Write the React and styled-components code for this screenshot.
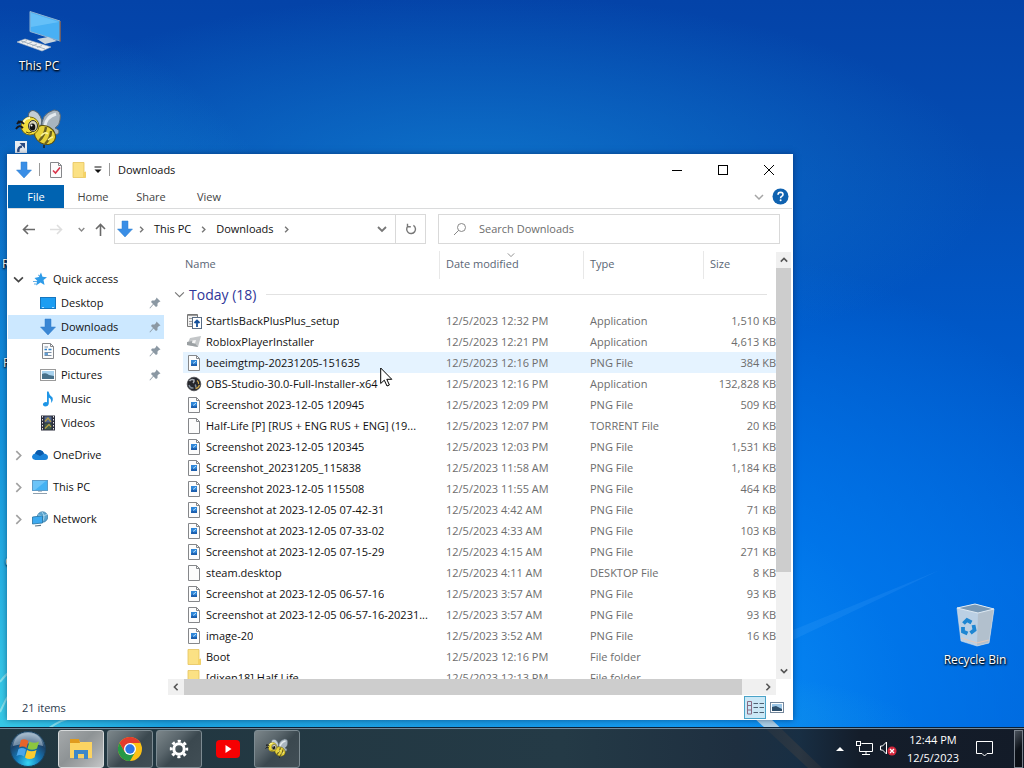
import React, { useState } from 'react'
import styled, { createGlobalStyle, css } from 'styled-components'

const GlobalStyle = createGlobalStyle`
    * {
        box-sizing : border-box;
    }
    body {
        margin : 0;
        overflow : hidden;
        font-family : "Open Sans", "Noto Sans", sans-serif;
        font-size : 11px;
        line-height : 16px;
        color : #111;
    }
    button, input {
        font : inherit;
        color : inherit;
        padding : 0;
        border : none;
        background : none;
        outline : none;
    }
    svg {
        display : block;
        flex : none;
    }
`;

const Screen = styled.div`
    position : relative;
    display : flex;
    flex-direction : column;
    height : 100vh;
    overflow : hidden;
    background :
        radial-gradient(ellipse 420px 700px at 0% 92%, #38cbe8 0%, rgba(24, 160, 224, 0.8) 40%, rgba(8, 110, 208, 0) 100%),
        radial-gradient(ellipse 700px 90px at 22% 95%, rgba(40, 180, 226, 0.9) 0%, rgba(20, 150, 230, 0) 100%),
        radial-gradient(ellipse 520px 460px at 66% 92%, #0a90f8 0%, rgba(0, 124, 240, 0.7) 45%, rgba(0, 100, 220, 0) 100%),
        radial-gradient(ellipse 520px 190px at 46% 24%, rgba(16, 122, 206, 0.85) 0%, rgba(8, 84, 186, 0) 100%),
        linear-gradient(180deg, #0443a8 0%, #044cb2 20%, #0057c6 42%, #0064da 75%, #005fd4 100%);
`;

// light streaks of the wallpaper
const Streaks = styled.svg`
    position : absolute;
    inset : 0;
    width : 100%;
    height : 100%;
`;

const DesktopArea = styled.main`
    position : relative;
    flex : 1;
    min-height : 0;
`;

const DesktopIcon = styled.button`
    position : absolute;
    left : ${({ $left }) => $left || 'auto'};
    right : ${({ $right }) => $right || 'auto'};
    top : ${({ $top }) => $top};
    width : 76px;
    display : flex;
    flex-direction : column;
    align-items : center;
    gap : 2px;
    font-size : 12px;
    color : #fff;
    text-shadow : 1px 1px 2px #000, 0 1px 2px #000;
    white-space : nowrap;
`;

const ShortcutBadge = styled.svg`
    position : absolute;
    left : 15px;
    top : 141px;
`;

const EdgeLabel = styled.span`
    position : absolute;
    left : ${({ $left }) => $left};
    top : ${({ $top }) => $top};
    font-size : 12px;
    color : #fff;
    text-shadow : 1px 1px 2px #000, 0 1px 2px #000;
`;

const Window = styled.section`
    position : absolute;
    left : 7px;
    right : 231px;
    top : 154px;
    bottom : 8px;
    display : flex;
    flex-direction : column;
    padding : 0 1px;
    background : #fff;
    box-shadow : 0 0 6px rgba(0, 20, 60, 0.5);
`;

const TitleBar = styled.header`
    display : flex;
    align-items : center;
    height : 31px;
    padding-left : 8px;
`;

const Divider = styled.span`
    width : 1px;
    height : 13px;
    background : #9a9a9a;
    margin : 0 8px 0 7px;
`;

const QuickButton = styled.button`
    display : flex;
    margin-right : ${({ $gap }) => $gap || '7px'};
`;

const Title = styled.h1`
    flex : 1;
    margin : 0;
    font-size : 11px;
    font-weight : 400;
`;

const WindowButton = styled.button`
    display : flex;
    align-items : center;
    justify-content : center;
    width : 46px;
    height : 30px;
`;

const Ribbon = styled.nav`
    display : flex;
    align-items : center;
    height : 24px;
    border-bottom : 1px solid #dadbdc;
`;

const Tab = styled.button`
    height : 23px;
    width : 58px;
    color : #444;
    ${({ $file }) => $file && css`
        width : 56px;
        background : #0063b1;
        color : #fff;
    `}
`;

const RibbonEnd = styled.div`
    display : flex;
    align-items : center;
    gap : 8px;
    margin-left : auto;
    padding-right : 3px;
`;

const NavRow = styled.div`
    display : flex;
    align-items : center;
    height : 40px;
    padding : 0 12px 0 11px;
`;

const NavButton = styled.button`
    display : flex;
    align-items : center;
    justify-content : center;
    width : ${({ $width }) => $width};
    height : 28px;
`;

const AddressBar = styled.div`
    flex : 1 1 312px;
    display : flex;
    align-items : center;
    height : 30px;
    padding-left : 2px;
    border : 1px solid #d9d9d9;
`;

const CrumbRoot = styled.button`
    display : flex;
    padding-left : 5px;
`;

const Crumb = styled.button`
    margin : 0 9px;
    color : #111;
`;

const AddressEnd = styled.div`
    display : flex;
    align-items : center;
    height : 100%;
    margin-left : auto;
`;

const Refresh = styled.button`
    display : flex;
    align-items : center;
    justify-content : center;
    width : 30px;
    height : 100%;
    margin-left : 8px;
    border-left : 1px solid #d9d9d9;
`;

const SearchBox = styled.label`
    flex : 1 1 342px;
    display : flex;
    align-items : center;
    gap : 12px;
    height : 30px;
    margin-left : 12px;
    padding-left : 14px;
    border : 1px solid #d9d9d9;
`;

const SearchInput = styled.input`
    flex : 1;
    min-width : 0;
    &::placeholder {
        color : #6d6d6d;
        opacity : 1;
    }
`;

const Body = styled.div`
    flex : 1;
    display : flex;
    min-height : 0;
`;

const Sidebar = styled.nav`
    width : 156px;
    padding-top : 18px;
    flex : none;
`;

const SideItem = styled.button`
    display : flex;
    align-items : center;
    width : 100%;
    height : 24px;
    margin-top : ${({ $spaced }) => ($spaced ? '8px' : '0')};
    padding-left : ${({ $child }) => ($child ? '32px' : '5px')};
    background : ${({ $active }) => ($active ? '#cce8ff' : 'transparent')};
`;

const SideArrow = styled.span`
    width : 19px;
`;

const SideText = styled.span`
    flex : 1;
    margin-left : 5px;
    text-align : left;
`;

const Pin = styled.span`
    margin-right : 3px;
`;

const Pane = styled.div`
    flex : 1;
    display : grid;
    grid-template-columns : minmax(0, 1fr) 16px;
    grid-template-rows : minmax(0, 1fr) 16px;
    margin-left : 4px;
    min-width : 0;
`;

const ListArea = styled.div`
    overflow : hidden;
`;

const FileTable = styled.table`
    width : 100%;
    table-layout : fixed;
    border-collapse : collapse;
    white-space : nowrap;
    th, td {
        padding : 0;
        font-weight : 400;
        text-align : left;
    }
`;

const HeadRow = styled.tr`
    height : 32px;
    color : #5a6675;
`;

const HeadCell = styled.div`
    position : relative;
    height : 28px;
    line-height : 26px;
    padding-left : ${({ $first }) => ($first ? '2px' : '6px')};
    border-left : ${({ $first }) => ($first ? 'none' : '1px solid #e8e8e8')};
`;

const SortMark = styled.span`
    position : absolute;
    left : 67px;
    top : 0;
`;

const GroupLine = styled.div`
    display : flex;
    align-items : center;
    gap : 4px;
    height : 29px;
    padding : 0 9px 2px 6px;
    font-size : 14px;
    line-height : 20px;
    color : #2f3699;
    &::after {
        content : '';
        flex : 1;
        height : 1px;
        margin-left : 6px;
        background : #e2e2e2;
    }
`;

const FileRow = styled.tr`
    height : 21px;
    td:not(:first-child) {
        background : ${({ $hover }) => ($hover ? '#e5f3ff' : 'transparent')};
    }
`;

const NameCell = styled.div`
    display : flex;
    align-items : center;
    gap : 4px;
    padding : 0 8px 0 3px;
`;

const FileName = styled.span`
    overflow : hidden;
    text-overflow : ellipsis;
`;

const Meta = styled.div`
    padding-left : 7px;
    color : #6d6d6d;
    text-align : ${({ $end }) => ($end ? 'right' : 'left')};
`;

const VScroll = styled.div`
    display : flex;
    flex-direction : column;
    align-items : center;
    width : 15px;
    margin-top : 3px;
    background : #f0f0f0;
`;

const HScroll = styled.div`
    display : flex;
    align-items : center;
    background : #f0f0f0;
`;

const ScrollButton = styled.button`
    display : flex;
    align-items : center;
    justify-content : center;
    width : 16px;
    height : 16px;
`;

const VThumb = styled.div`
    width : 100%;
    flex : 304;
    background : #cdcdcd;
`;

const VRest = styled.div`
    flex : 91;
`;

const HThumb = styled.div`
    height : 16px;
    flex : 557;
    background : #cdcdcd;
`;

const HRest = styled.div`
    flex : 18;
`;

const StatusBar = styled.footer`
    display : flex;
    align-items : center;
    height : 25px;
    padding : 0 4px 0 14px;
    color : #2b3a4e;
`;

const ViewButton = styled.button`
    display : flex;
    align-items : center;
    justify-content : center;
    width : 22px;
    height : 23px;
    border : 1px solid ${({ $active }) => ($active ? '#4aa3c8' : 'transparent')};
    background : ${({ $active }) => ($active ? '#cbe8f6' : 'transparent')};
`;

const Views = styled.div`
    display : flex;
    margin-left : auto;
`;

const Pointer = styled.svg`
    position : absolute;
    left : 380px;
    top : 367px;
`;

const TaskBar = styled.footer`
    position : relative;
    display : flex;
    align-items : center;
    gap : 3px;
    height : 40px;
    padding-right : 1px;
    border-top : 1px solid #73899a;
    box-shadow : 0 -1px 0 #0c2034;
    background : linear-gradient(90deg, #21363f 0%, #243a46 55%, #1e2f40 72%, rgba(26, 34, 44, 0.88) 78%, #141d2a 84%, #131b28 100%);
    color : #fff;
`;

const StartButton = styled.button`
    display : flex;
    justify-content : center;
    width : 55px;
`;

const TaskButton = styled.button`
    display : flex;
    align-items : center;
    justify-content : center;
    width : 46px;
    height : 38px;
    border : 1px solid transparent;
    border-radius : 3px;
    ${({ $state }) => $state === 'open' && css`
        border-color : #7d8b92;
        background : linear-gradient(135deg, #7c868a 0%, #59656b 35%, #3b484f 55%, #414e55 100%);
    `}
    ${({ $state }) => $state === 'active' && css`
        border-color : #d6d9da;
        background : linear-gradient(135deg, #a5a9ab 0%, #8e9395 45%, #a4a7a8 70%, #c4c6c7 100%);
    `}
`;

const Tray = styled.div`
    display : flex;
    align-items : center;
    height : 100%;
    margin-left : auto;
`;

const TrayButton = styled.button`
    display : flex;
    align-items : center;
    justify-content : center;
    width : ${({ $width }) => $width || '24px'};
    height : 100%;
`;

const Clock = styled.button`
    width : 66px;
    line-height : 18px;
    color : #fff;
    text-align : center;
`;

const ShowDesktop = styled.button`
    width : 9px;
    height : 38px;
    margin-left : 11px;
    border : 1px solid #7a828c;
    background : linear-gradient(135deg, #4a525c 0%, #0c1118 50%, #0a0e14 100%);
`;

const Chevron = ({ dir = 'down', size = 8, color = '#555', width = 1.5 }) => {
    const paths = {
        down: 'M1 3 L5 7 L9 3',
        up: 'M1 7 L5 3 L9 7',
        right: 'M3 1 L7 5 L3 9',
        left: 'M7 1 L3 5 L7 9',
    };
    return (
        <svg width={size} height={size} viewBox='0 0 10 10' fill='none' stroke={color} strokeWidth={width}>
            <path d={paths[dir]} />
        </svg>
    )
}

const DownArrow = ({ color = '#3a8ee6' }) => (
    <svg width='16' height='18' viewBox='0 0 16 18'>
        <path d='M5 1 H11 V9 H15.5 L8 17 L0.5 9 H5 Z' fill={color} stroke='#2f7fce' strokeWidth='0.5' />
    </svg>
)

const Folder = ({ size = 16 }) => (
    <svg width={size} height={size} viewBox='0 0 16 16'>
        <path d='M2 0.5 H13 V11 L14.5 10 V15.5 H2 Z' fill='#fbe184' stroke='#e6c35c' strokeWidth='0.8' />
        <path d='M12 11 L14.5 9.5 V15.5 H12 Z' fill='#f6d365' />
    </svg>
)

const Page = ({ children }) => (
    <svg width='16' height='16' viewBox='0 0 16 16'>
        <path d='M2.5 0.5 H10.5 L13.5 3.5 V15.5 H2.5 Z' fill='#fcfcfc' stroke='#85878a' />
        <path d='M10.5 0.5 V3.5 H13.5' fill='none' stroke='#85878a' />
        {children}
    </svg>
)

const fileIcons = {
    png: (
        <Page>
            <rect x='5' y='5' width='6' height='6' fill='#2f86d8' />
            <path d='M5 11 V9.5 L7 8 L8.5 9.5 L11 8.5 V11 Z' fill='#1d5fae' />
            <path d='M7 8.5 L10 6.2' stroke='#b4dcfb' strokeWidth='1' />
        </Page>
    ),
    blank: <Page />,
    folder: <Folder />,
    setup: (
        <svg width='16' height='16' viewBox='0 0 16 16'>
            <path d='M1.5 1.5 H11.5 V13.5 H1.5 Z' fill='#f1f1f1' stroke='#777' />
            <path d='M2 2.5 H11 M3 5.5 H6 M3 8.5 H6 M3 11 H6' stroke='#999' />
            <rect x='6.5' y='4.5' width='9' height='11' fill='#fff' stroke='#5a6d85' />
            <path d='M11 14 V8 M8.5 10 L11 7.5 L13.5 10' fill='none' stroke='#14509b' strokeWidth='1.8' />
        </svg>
    ),
    roblox: (
        <svg width='16' height='16' viewBox='0 0 16 16'>
            <path d='M4 4 L15 2 L12 13 L1 11 Z' fill='#c3c6c8' />
            <path d='M1 8 L7 7 L12 13 L1 11 Z' fill='#9ba0a3' />
            <path d='M6.5 6.5 L10 6 L9 9.5 L6 9 Z' fill='#f4f4f4' />
        </svg>
    ),
    obs: (
        <svg width='16' height='16' viewBox='0 0 16 16'>
            <circle cx='8' cy='8' r='6.8' fill='#25262b' stroke='#4b4c52' strokeWidth='0.8' />
            <path d='M3.5 5 Q5.5 2.5 8 4 Q8.5 5.5 7 7' fill='none' stroke='#a9adb3' strokeWidth='1.5' />
            <path d='M3 9 Q4 12.5 7.5 12 M9 8.5 Q10.5 10 9.5 11.5' fill='none' stroke='#7e8a97' strokeWidth='1.5' />
            <path d='M9.5 12.5 Q12.5 12 13.5 9 M11 4.5 Q13 6 12.5 8' fill='none' stroke='#c7a24a' strokeWidth='1.3' />
        </svg>
    ),
};

const Bee = ({ size = 48 }) => (
    <svg width={size} height={size} viewBox='0 0 48 48'>
        <ellipse cx='20' cy='13' rx='6' ry='9' transform='rotate(-28 20 13)' fill='#c3cdd4' stroke='#56646f' />
        <path d='M27 23 Q25 8 39 4 Q47 4 45 14 Q45 19 40 22 Q46 24 43 28 Q35 31 28 26 Z' fill='#a9b5bf' stroke='#5b6873' />
        <path d='M30 20 Q31 11 41 8' fill='none' stroke='#e4eaee' strokeWidth='3' />
        <ellipse cx='30' cy='29' rx='11' ry='9' transform='rotate(30 30 29)' fill='#e6d23a' stroke='#5d5210' />
        <path d='M24 35 Q30 29 31 21 M30 38 Q36 32 36 25' fill='none' stroke='#6b6120' strokeWidth='2.4' />
        <path d='M26 30 Q30 25 33 28 M33 34 Q36 31 38 31' fill='none' stroke='#fbf59a' strokeWidth='1.5' />
        <path d='M29 39 V42' stroke='#222' strokeWidth='1.5' />
        <circle cx='15' cy='20' r='9' fill='#f0dd3c' stroke='#7a6c12' />
        <path d='M8 17 Q10 12 15 12' fill='none' stroke='#fffbc0' strokeWidth='2' />
        <ellipse cx='18' cy='20' rx='4.5' ry='5.5' fill='#d8d6c0' stroke='#333' />
        <ellipse cx='17.5' cy='21' rx='2.8' ry='3.5' fill='#111' />
        <circle cx='16.5' cy='19.5' r='1' fill='#fff' />
        <path d='M9 18 Q5 13 2 18 M8 22 Q4 18 1 23 M5 17 L3 15' fill='none' stroke='#15151c' strokeWidth='1.8' />
        <path d='M11 26 Q14 28 17 26' fill='none' stroke='#5d4c08' />
    </svg>
)

const ThisPcLarge = () => (
    <svg width='48' height='48' viewBox='0 0 48 48'>
        <path d='M15 3.5 L45 13 V33 L15 23.5 Z' fill='#48b0f4' stroke='#8fb4d2' strokeWidth='1' />
        <path d='M16 5 L44 14 L16 19 Z' fill='#7accfa' opacity='0.6' />
        <path d='M44.5 13 L46 13.5 V34 L44.5 33 Z' fill='#6b5d66' />
        <path d='M22 31 L33 29 L42 33 L30 36 Z' fill='#c9d4dc' />
        <path d='M2 34 L10 31 L36 39 L27 43 Z' fill='#eef0f2' stroke='#b2bcc5' strokeWidth='0.6' />
        <path d='M7 34.5 L12 32.5 M12 36 L17 34 M17 38 L22 36 M22 39.5 L27 37.5 M6 33 L30 41' stroke='#9ba9b6' strokeWidth='0.8' />
    </svg>
)

const RecycleBin = () => (
    <svg width='48' height='48' viewBox='0 0 48 48'>
        <path d='M6 6 L24 2 L43 7 L38 41 L26 44 L10 39 Z' fill='#cbd8e4' fillOpacity='0.92' />
        <path d='M27 11 L43 7 L38 41 L26 44 Z' fill='#b2c0cd' />
        <path d='M6 6 L24 2 L43 7 L27 11 Z' fill='#7999b5' stroke='#dfeaf3' strokeWidth='1' />
        <path d='M6 6 L10 39 L26 44 L38 41 L43 7' fill='none' stroke='#d3dfe9' strokeWidth='0.6' />
        <path d='M10 36 L26 41 L38 38' fill='none' stroke='#e3c9bc' strokeWidth='1.2' />
        <g fill='none' stroke='#1e86d2' strokeWidth='3.8'>
            <path d='M12.5 21.5 L16 18 L20.5 20.5' />
            <path d='M22.5 23 L23.5 28 L19.5 31' />
            <path d='M16.5 31.5 L12 29.5 L12 25' />
        </g>
    </svg>
)

const Monitor = () => (
    <svg width='16' height='16' viewBox='0 0 16 16'>
        <rect x='0.5' y='1.5' width='15' height='10' fill='#45b2f3' stroke='#5f9cc8' />
        <path d='M1 2 H14 L3 11 H1 Z' fill='#6cc4f8' />
        <path d='M1 14.5 H15' stroke='#8fa0ae' />
        <path d='M6 12 H10 V13 H6 Z' fill='#b8c4cd' />
    </svg>
)

const sideIcons = {
    star: (
        <svg width='16' height='16' viewBox='0 0 16 16'>
            <path d='M9 1.5 L10.5 5.8 L15 6.2 L11.5 9 L12.5 14 L8.5 11.5 L4 14.5 L5.2 9.8 L2.5 7 L6.8 6 Z' fill='#2e9be8' />
            <path d='M1 10.5 H5 M2 13 H4 M6 4 L8 5' stroke='#63aee6' />
        </svg>
    ),
    desktop: (
        <svg width='16' height='16' viewBox='0 0 16 16'>
            <rect x='0.5' y='2.5' width='15' height='11' fill='#1c9df2' stroke='#1676bf' />
            <path d='M2 12.5 H4 M12 12.5 H14' stroke='#a9dbff' />
        </svg>
    ),
    downloads: <DownArrow color='#3b87d4' />,
    documents: (
        <Page>
            <path d='M4.5 4 H8 M4.5 9.5 H11.5 M4.5 12.5 H11.5' stroke='#7a8fa5' />
            <path d='M4.5 6.5 H7 M8.5 6.5 H11.5 M4.5 11 H8' stroke='#2f80c8' strokeWidth='1.4' />
        </Page>
    ),
    pictures: (
        <svg width='16' height='16' viewBox='0 0 16 16'>
            <rect x='0.5' y='2.5' width='15' height='11' fill='#fff' stroke='#9a9a9a' />
            <rect x='2' y='4' width='12' height='8' fill='#a8d2ee' />
            <path d='M2 7 Q6 5 9 8 L14 9 V12 H2 Z' fill='#46708a' />
        </svg>
    ),
    music: (
        <svg width='16' height='16' viewBox='0 0 16 16'>
            <path d='M7 0.5 H8.5 Q9 4 12.5 6.5 Q13.5 9.5 11 12 Q12 8 8.8 6.5 V12.5 Q8.5 15.5 5 15.5 Q2.5 15 3 12.8 Q4.2 10.5 7 11.3 Z' fill='#1e95e6' />
        </svg>
    ),
    videos: (
        <svg width='16' height='16' viewBox='0 0 16 16'>
            <rect x='1' y='0.5' width='14' height='15' fill='#2c2e3d' />
            <path d='M2.5 1 V15 M13.5 1 V15' stroke='#e7e7e7' strokeDasharray='1.5 1.5' />
            <rect x='4.5' y='1.5' width='7' height='6' fill='#53688e' />
            <rect x='4.5' y='8.5' width='7' height='6' fill='#3f5a4c' />
            <path d='M5 6.5 L8 3 L11 7 M5 13.5 L9 9.5 L11 12' fill='none' stroke='#b9a043' strokeWidth='1.2' />
        </svg>
    ),
    onedrive: (
        <svg width='16' height='16' viewBox='0 0 16 16'>
            <path d='M3.5 13 Q0 12.5 0 9.5 Q0.5 7 3 6.5 Q5 2.5 8.5 3.2 Q11 3.5 12 6.5 Q16 7 16 10 Q16 13 13 13 Z' fill='#1b84da' />
            <path d='M3 6.5 Q5 2.5 8.5 3.2 Q11 3.5 12 6.5 L8 9 Z' fill='#0a5aab' />
        </svg>
    ),
    pc: <Monitor />,
    network: (
        <svg width='16' height='16' viewBox='0 0 16 16'>
            <circle cx='10.5' cy='6' r='5.2' fill='#5aa4cf' stroke='#3d7fa9' strokeWidth='0.8' />
            <path d='M10 1 Q14 6 10 11 M6 4 Q11 6 15 3.5' fill='none' stroke='#a9d6ee' />
            <path d='M0.5 6 L10.5 4.8 V12 L0.5 13 Z' fill='#3daaf0' stroke='#24719f' strokeWidth='0.8' />
            <path d='M3 15 L9 14.3' stroke='#5c7686' strokeWidth='1.2' />
        </svg>
    ),
};

const PinIcon = () => (
    <svg width='12' height='12' viewBox='0 0 12 12'>
        <path d='M7.5 0.5 L11.5 4.5 L10 5 L8.5 6.5 L8.5 9 L7 10 L4.5 7.5 L1 11.5 L0.5 11 L4 7 L2 5 L3 3.5 L5.5 3.5 L7 2 Z' fill='#8b98a3' />
    </svg>
)

const StartOrb = () => (
    <svg width='38' height='38' viewBox='0 0 38 38'>
        <defs>
            <radialGradient id='orb' cx='50%' cy='90%' r='85%'>
                <stop offset='0' stopColor='#35d6f5' />
                <stop offset='0.4' stopColor='#1478b8' />
                <stop offset='0.75' stopColor='#1d4268' />
                <stop offset='1' stopColor='#7f9bb2' />
            </radialGradient>
        </defs>
        <circle cx='19' cy='19' r='17.5' fill='url(#orb)' stroke='#17405e' />
        <path d='M4 16 Q6 3 19 3 Q32 3 34 16 Q19 11 4 16 Z' fill='#d9e6ef' opacity='0.45' />
        <path d='M12 10 Q16 8 19.5 11 L17.5 18 Q14 15.5 10 17.5 Z' fill='#e8642a' />
        <path d='M20.5 11.5 Q25 14 30 11.5 L28 18.5 Q23 21 18.5 18.5 Z' fill='#8cc63e' />
        <path d='M9.5 19 Q13 17 17 19.5 L15 26.5 Q11 24 7.5 26 Z' fill='#4ba6ea' />
        <path d='M18 20 Q22.5 22.5 27.5 20 L25.5 27.5 Q20 30.5 16 27.5 Z' fill='#fccb2f' />
    </svg>
)

const taskIcons = {
    explorer: (
        <svg width='24' height='24' viewBox='0 0 24 24'>
            <path d='M1 3 H10 L11 5 H23 V21 H1 Z' fill='#fcd462' />
            <path d='M1 2 H10 L11 6 H1 Z' fill='#e09b1e' />
            <path d='M5 13 H19 V22 H15 V17 H9 V22 H5 Z' fill='#3d87c9' />
            <path d='M9 17 H15 V21 H9 Z' fill='#f4cf67' />
        </svg>
    ),
    chrome: (
        <svg width='24' height='24' viewBox='0 0 24 24'>
            <circle cx='12' cy='12' r='12' fill='#fbc116' />
            <path d='M1.6 6 A12 12 0 0 0 12 24 L17.2 15 L12 12 L6.8 15 Z' fill='#279847' />
            <path d='M1.6 6 A12 12 0 0 1 22.4 6 H12 L6.8 15 Z' fill='#e33b2e' />
            <circle cx='12' cy='12' r='6' fill='#fff' />
            <circle cx='12' cy='12' r='4.7' fill='#2c75e8' />
        </svg>
    ),
    settings: (
        <svg width='20' height='20' viewBox='0 0 20 20' fill='none' stroke='#fff'>
            <circle cx='10' cy='10' r='5.2' strokeWidth='3' />
            <circle cx='10' cy='10' r='7.8' strokeWidth='2.8' strokeDasharray='3.06 3.06' strokeDashoffset='1.5' />
        </svg>
    ),
    youtube: (
        <svg width='24' height='18' viewBox='0 0 24 18'>
            <rect width='24' height='18' rx='4' fill='#f60002' />
            <path d='M9.5 5 L15.5 9 L9.5 13 Z' fill='#fff' />
        </svg>
    ),
    bee: <Bee size={24} />,
};

const places = [
    { name: 'Desktop', icon: 'desktop', child: true, pinned: true },
    { name: 'Downloads', icon: 'downloads', child: true, pinned: true },
    { name: 'Documents', icon: 'documents', child: true, pinned: true },
    { name: 'Pictures', icon: 'pictures', child: true, pinned: true },
    { name: 'Music', icon: 'music', child: true },
    { name: 'Videos', icon: 'videos', child: true },
    { name: 'OneDrive', icon: 'onedrive' },
    { name: 'This PC', icon: 'pc' },
    { name: 'Network', icon: 'network' },
];

const files = [
    ['setup', 'StartIsBackPlusPlus_setup', '12:32 PM', 'Application', '1,510 KB'],
    ['roblox', 'RobloxPlayerInstaller', '12:21 PM', 'Application', '4,613 KB'],
    ['png', 'beeimgtmp-20231205-151635', '12:16 PM', 'PNG File', '384 KB'],
    ['obs', 'OBS-Studio-30.0-Full-Installer-x64', '12:16 PM', 'Application', '132,828 KB'],
    ['png', 'Screenshot 2023-12-05 120945', '12:09 PM', 'PNG File', '509 KB'],
    ['blank', 'Half-Life [P] [RUS + ENG RUS + ENG] (19...', '12:07 PM', 'TORRENT File', '20 KB'],
    ['png', 'Screenshot 2023-12-05 120345', '12:03 PM', 'PNG File', '1,531 KB'],
    ['png', 'Screenshot_20231205_115838', '11:58 AM', 'PNG File', '1,184 KB'],
    ['png', 'Screenshot 2023-12-05 115508', '11:55 AM', 'PNG File', '464 KB'],
    ['png', 'Screenshot at 2023-12-05 07-42-31', '4:42 AM', 'PNG File', '71 KB'],
    ['png', 'Screenshot at 2023-12-05 07-33-02', '4:33 AM', 'PNG File', '103 KB'],
    ['png', 'Screenshot at 2023-12-05 07-15-29', '4:15 AM', 'PNG File', '271 KB'],
    ['blank', 'steam.desktop', '4:11 AM', 'DESKTOP File', '8 KB'],
    ['png', 'Screenshot at 2023-12-05 06-57-16', '3:57 AM', 'PNG File', '93 KB'],
    ['png', 'Screenshot at 2023-12-05 06-57-16-20231...', '3:57 AM', 'PNG File', '93 KB'],
    ['png', 'image-20', '3:52 AM', 'PNG File', '16 KB'],
    ['folder', 'Boot', '12:16 PM', 'File folder', ''],
    ['folder', '[dixen18] Half Life', '12:13 PM', 'File folder', ''],
];

const Explorer = () => {
    const [place, setPlace] = useState('Downloads');
    const [hovered, setHovered] = useState(2);
    const [search, setSearch] = useState('');

    return (
        <Window>
            <TitleBar>
                <DownArrow />
                <Divider />
                <QuickButton aria-label='Properties'>
                    <Page><path d='M5 8.5 L7.5 11 L12 5.5' fill='none' stroke='#d9344a' strokeWidth='1.6' /></Page>
                </QuickButton>
                <QuickButton aria-label='New folder'><Folder /></QuickButton>
                <QuickButton aria-label='Customize toolbar' $gap='0'>
                    <svg width='8' height='8' viewBox='0 0 8 8'><path d='M0.5 1 H7.5' stroke='#111' /><path d='M0.5 3.5 H7.5 L4 7 Z' fill='#111' /></svg>
                </QuickButton>
                <Divider />
                <Title>Downloads</Title>
                <WindowButton aria-label='Minimize'>
                    <svg width='10' height='10' viewBox='0 0 10 10'><path d='M0 5.5 H10' stroke='#000' /></svg>
                </WindowButton>
                <WindowButton aria-label='Maximize'>
                    <svg width='10' height='10' viewBox='0 0 10 10'><rect x='0.5' y='0.5' width='9' height='9' fill='none' stroke='#000' /></svg>
                </WindowButton>
                <WindowButton aria-label='Close'>
                    <svg width='10' height='10' viewBox='0 0 10 10'><path d='M0 0 L10 10 M10 0 L0 10' stroke='#000' /></svg>
                </WindowButton>
            </TitleBar>
            <Ribbon>
                <Tab $file>File</Tab>
                <Tab>Home</Tab>
                <Tab>Share</Tab>
                <Tab>View</Tab>
                <RibbonEnd>
                    <Chevron size={10} color='#a5a5a5' />
                    <svg width='17' height='17' viewBox='0 0 17 17'>
                        <circle cx='8.5' cy='8.5' r='8' fill='#0f62b0' />
                        <path d='M6 6.8 Q6 4.2 8.6 4.2 Q11 4.3 11 6.4 Q11 7.6 9.6 8.4 Q8.6 9 8.6 10.2' fill='none' stroke='#fff' strokeWidth='1.6' />
                        <circle cx='8.6' cy='12.3' r='1' fill='#fff' />
                    </svg>
                </RibbonEnd>
            </Ribbon>
            <NavRow>
                <NavButton $width='18px' aria-label='Back'>
                    <svg width='13' height='11' viewBox='0 0 13 11' fill='none' stroke='#6a6a6a' strokeWidth='1.6'><path d='M13 5.5 H1.5 M6 1 L1.5 5.5 L6 10' /></svg>
                </NavButton>
                <NavButton $width='38px' aria-label='Forward'>
                    <svg width='13' height='11' viewBox='0 0 13 11' fill='none' stroke='#dedede' strokeWidth='1.6'><path d='M0 5.5 H11.5 M7 1 L11.5 5.5 L7 10' /></svg>
                </NavButton>
                <NavButton $width='12px' aria-label='Recent locations'><Chevron size={7} color='#888' width={2} /></NavButton>
                <NavButton $width='27px' aria-label='Up'>
                    <svg width='11' height='13' viewBox='0 0 11 13' fill='none' stroke='#6a6a6a' strokeWidth='1.6'><path d='M5.5 13 V1.5 M1 6 L5.5 1.5 L10 6' /></svg>
                </NavButton>
                <AddressBar>
                    <DownArrow />
                    <CrumbRoot aria-label='Root'><Chevron dir='right' size={7} color='#777' width={2} /></CrumbRoot>
                    <Crumb>This PC</Crumb>
                    <Chevron dir='right' size={7} color='#777' width={2} />
                    <Crumb>Downloads</Crumb>
                    <Chevron dir='right' size={7} color='#777' width={2} />
                    <AddressEnd>
                        <Chevron size={10} color='#777' width={1.8} />
                        <Refresh aria-label='Refresh'>
                            <svg width='12' height='12' viewBox='0 0 12 12' fill='none' stroke='#777' strokeWidth='1.4'>
                                <path d='M8.4 2.4 A4.4 4.4 0 1 1 3 3 M2.5 0.7 V3.7 H5.8' />
                            </svg>
                        </Refresh>
                    </AddressEnd>
                </AddressBar>
                <SearchBox htmlFor='search'>
                    <svg width='14' height='14' viewBox='0 0 14 14' fill='none' stroke='#888'>
                        <circle cx='8.5' cy='5.5' r='4' />
                        <path d='M5.7 8.3 L1 13' />
                    </svg>
                    <SearchInput id='search' placeholder='Search Downloads' value={search} onChange={(e) => setSearch(e.target.value)} />
                </SearchBox>
            </NavRow>
            <Body>
                <Sidebar>
                    <SideItem>
                        <SideArrow><Chevron size={11} color='#444' /></SideArrow>
                        {sideIcons.star}
                        <SideText>Quick access</SideText>
                    </SideItem>
                    {places.map((item) => (
                        <SideItem key={item.name} $child={item.child} $spaced={!item.child} $active={place === item.name} onClick={() => setPlace(item.name)}>
                            {!item.child && <SideArrow><Chevron dir='right' size={11} color='#a0a0a0' /></SideArrow>}
                            {sideIcons[item.icon]}
                            <SideText>{item.name}</SideText>
                            {item.pinned && <Pin><PinIcon /></Pin>}
                        </SideItem>
                    ))}
                </Sidebar>
                <Pane>
                    <ListArea>
                        <FileTable>
                            <colgroup>
                                <col width='15' />
                                <col />
                                <col width='144' />
                                <col width='120' />
                                <col width='73' />
                            </colgroup>
                            <thead>
                                <HeadRow>
                                    <td></td>
                                    <th><HeadCell $first>Name</HeadCell></th>
                                    <th><HeadCell>Date modified<SortMark><Chevron color='#777' width={1} /></SortMark></HeadCell></th>
                                    <th><HeadCell>Type</HeadCell></th>
                                    <th><HeadCell>Size</HeadCell></th>
                                </HeadRow>
                            </thead>
                            <tbody>
                                <tr>
                                    <td colSpan='5'>
                                        <GroupLine><Chevron size={11} color='#777' width={1} />Today (18)</GroupLine>
                                    </td>
                                </tr>
                                {files.map(([icon, name, time, type, size], i) => (
                                    <FileRow key={name} $hover={hovered === i} onMouseEnter={() => setHovered(i)}>
                                        <td></td>
                                        <td><NameCell>{fileIcons[icon]}<FileName>{name}</FileName></NameCell></td>
                                        <td><Meta>12/5/2023 {time}</Meta></td>
                                        <td><Meta>{type}</Meta></td>
                                        <td><Meta $end>{size}</Meta></td>
                                    </FileRow>
                                ))}
                            </tbody>
                        </FileTable>
                    </ListArea>
                    <VScroll>
                        <ScrollButton aria-label='Scroll up'><Chevron dir='up' width={2} /></ScrollButton>
                        <VThumb />
                        <VRest />
                        <ScrollButton aria-label='Scroll down'><Chevron width={2} /></ScrollButton>
                    </VScroll>
                    <HScroll>
                        <ScrollButton aria-label='Scroll left'><Chevron dir='left' width={2} /></ScrollButton>
                        <HThumb />
                        <HRest />
                        <ScrollButton aria-label='Scroll right'><Chevron dir='right' width={2} /></ScrollButton>
                    </HScroll>
                </Pane>
            </Body>
            <StatusBar>
                <span>21 items</span>
                <Views>
                    <ViewButton $active aria-label='Details view'>
                        <svg width='17' height='14' viewBox='0 0 17 14' fill='none'>
                            <path d='M0.5 0.5 H4.5 V13 H0.5 Z M0.5 4.5 H4.5 M0.5 9 H4.5' stroke='#8a6b83' />
                            <path d='M6.5 2.5 H11 M12.5 2.5 H17 M6.5 6.5 H11 M12.5 6.5 H17 M6.5 11.5 H11 M12.5 11.5 H17' stroke='#4e6273' />
                        </svg>
                    </ViewButton>
                    <ViewButton aria-label='Large icons view'>
                        <svg width='14' height='11' viewBox='0 0 14 11'>
                            <rect x='0.5' y='0.5' width='13' height='10' fill='#fff' stroke='#74879b' />
                            <rect x='2' y='2' width='10' height='7' fill='#9cc6e6' />
                            <path d='M2 5 L6 4 L12 7 V9 H2 Z' fill='#2e4f6b' />
                        </svg>
                    </ViewButton>
                </Views>
            </StatusBar>
        </Window>
    )
}

const App = () => {
    return (
        <>
            <GlobalStyle />
            <Screen>
                <Streaks viewBox='0 0 1024 768' preserveAspectRatio='none'>
                    <path d='M752 716 L768 716 L822 768 L808 768 Z' fill='#dfe3e2' opacity='0.75' />
                    <path d='M793 630 L940 570 L793 640 Z' fill='#5ab4ff' opacity='0.14' />
                    <path d='M0 682 Q6 674 10 672 M0 712 Q5 700 12 690 M40 735 Q55 722 70 718' fill='none' stroke='#b8f0f0' strokeWidth='2' opacity='0.6' />
                </Streaks>
                <DesktopArea>
                    <DesktopIcon $left='1px' $top='8px'><ThisPcLarge />This PC</DesktopIcon>
                    <DesktopIcon $left='1px' $top='106px' aria-label='Bee'><Bee /></DesktopIcon>
                    <ShortcutBadge width='12' height='12' viewBox='0 0 12 12'>
                        <rect width='12' height='12' fill='#e9edf2' />
                        <path d='M3.5 11 Q2.5 6 7 5.5' fill='none' stroke='#2c4a80' strokeWidth='2.4' />
                        <path d='M4.5 2 H10 V7.5 Z' fill='#2c4a80' />
                    </ShortcutBadge>
                    <EdgeLabel $left='2px' $top='256px'>R</EdgeLabel>
                    <EdgeLabel $left='3px' $top='355px'>F</EdgeLabel>
                    <EdgeLabel $left='5px' $top='554px'>C</EdgeLabel>
                    <DesktopIcon $right='11px' $top='602px'><RecycleBin />Recycle Bin</DesktopIcon>
                    <Explorer />
                    <Pointer width='13' height='20' viewBox='0 0 13 20'>
                        <path d='M0.7 1 V16.5 L4.3 13.2 L7 19 L9.4 18 L6.8 12.3 H11.8 Z' fill='#fff' stroke='#000' />
                    </Pointer>
                </DesktopArea>
                <TaskBar>
                    <StartButton aria-label='Start'><StartOrb /></StartButton>
                    <TaskButton $state='active' aria-label='File Explorer'>{taskIcons.explorer}</TaskButton>
                    <TaskButton $state='open' aria-label='Chrome'>{taskIcons.chrome}</TaskButton>
                    <TaskButton $state='open' aria-label='Settings'>{taskIcons.settings}</TaskButton>
                    <TaskButton aria-label='YouTube'>{taskIcons.youtube}</TaskButton>
                    <TaskButton $state='open' aria-label='Bee'>{taskIcons.bee}</TaskButton>
                    <Tray>
                        <TrayButton aria-label='Show hidden icons'>
                            <svg width='8' height='4' viewBox='0 0 8 4'><path d='M0 4 L4 0 L8 4 Z' fill='#fff' /></svg>
                        </TrayButton>
                        <TrayButton aria-label='Network'>
                            <svg width='17' height='15' viewBox='0 0 17 15' fill='none' stroke='#fff'>
                                <path d='M5.5 2.5 H16.5 V10.5 H3.5 V5.5 M10 10.5 V13.5 M6 13.5 H14' />
                                <rect x='0.5' y='0.5' width='4' height='4' />
                            </svg>
                        </TrayButton>
                        <TrayButton aria-label='Volume muted'>
                            <svg width='17' height='15' viewBox='0 0 17 15' fill='none'>
                                <path d='M0.5 5 H2.5 L6.5 1 V13 L2.5 9 H0.5 Z' stroke='#fff' />
                                <circle cx='12' cy='10' r='4.5' fill='#d5273c' />
                                <path d='M10 8 L14 12 M14 8 L10 12' stroke='#fff' strokeWidth='1.3' />
                            </svg>
                        </TrayButton>
                        <Clock>12:44 PM<br />12/5/2023</Clock>
                        <TrayButton $width='37px' aria-label='Notifications'>
                            <svg width='17' height='16' viewBox='0 0 17 16' fill='none' stroke='#fff'>
                                <path d='M0.5 0.5 H16.5 V12.5 H11 L8.5 15 L6 12.5 H0.5 Z' />
                            </svg>
                        </TrayButton>
                        <ShowDesktop aria-label='Show desktop' />
                    </Tray>
                </TaskBar>
            </Screen>
        </>
    )
}

export default App
